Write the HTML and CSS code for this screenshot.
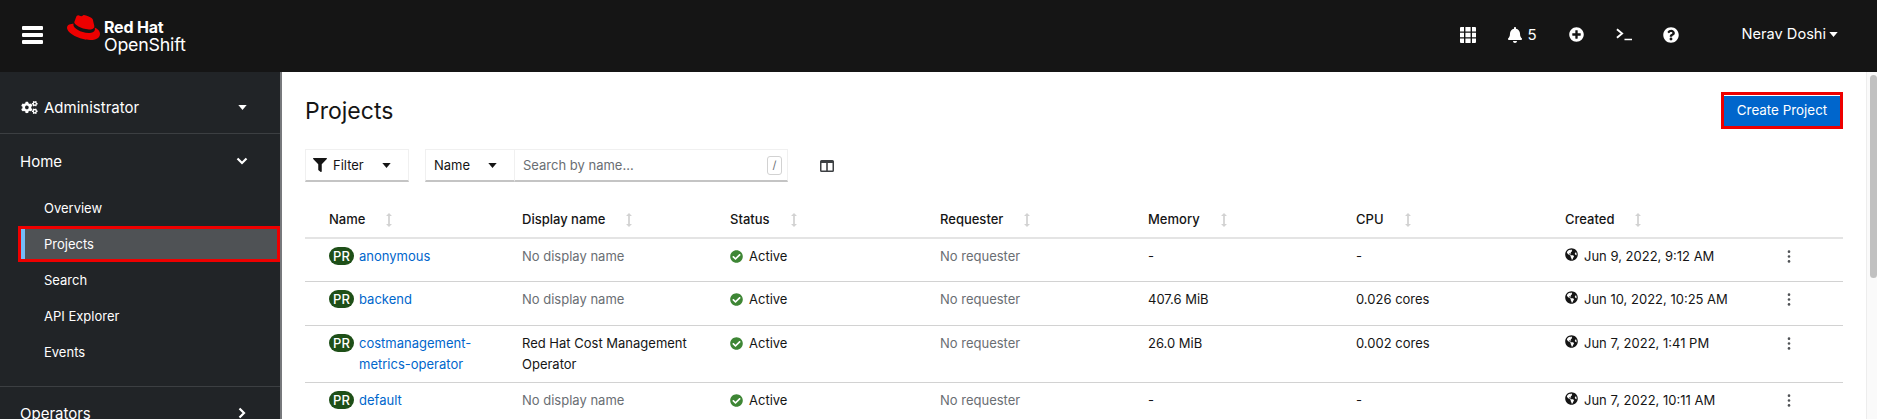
FILE: index.html
```html
<!DOCTYPE html>
<html>

<head>
    <meta charset="UTF-8">
    <title>Projects · Red Hat OpenShift</title>
    <link rel="stylesheet" href="styles.css">
</head>

<body>
    <svg class="icon-defs" xmlns="http://www.w3.org/2000/svg">
        <symbol id="i-hat" viewBox="0 0 24 24"><path d="M16.009 13.386c1.577 0 3.86-.326 3.86-2.202a1.765 1.765 0 0 0-.04-.431l-.94-4.08c-.216-.898-.406-1.305-1.982-2.093-1.223-.625-3.888-1.658-4.676-1.658-.733 0-.947.946-1.822.946-.842 0-1.467-.706-2.255-.706-.757 0-1.25.515-1.63 1.576 0 0-1.06 2.99-1.197 3.424a.81.81 0 0 0-.028.245c0 1.162 4.577 4.974 10.71 4.974m4.101-1.435c.218 1.032.218 1.14.218 1.277 0 1.765-1.984 2.745-4.593 2.745-5.895.004-11.06-3.451-11.06-5.734a2.326 2.326 0 0 1 .19-.925C2.746 9.415 0 9.794 0 12.217c0 3.969 9.405 8.861 16.851 8.861 5.71 0 7.149-2.582 7.149-4.62 0-1.605-1.387-3.425-3.887-4.512"/></symbol>
        <symbol id="i-cogs" viewBox="0 0 640 512"><path d="M512.1 191l-8.2 14.3c-3 5.3-9.4 7.5-15.1 5.4-11.8-4.4-22.6-10.7-32.1-18.6-4.6-3.8-5.8-10.5-2.8-15.7l8.2-14.3c-6.9-8-12.3-17.3-15.9-27.4h-16.5c-6 0-11.2-4.3-12.2-10.3-2-12-2.1-24.6 0-37.1 1-6 6.2-10.4 12.2-10.4h16.5c3.6-10.1 9-19.4 15.9-27.4l-8.2-14.3c-3-5.2-1.9-11.9 2.8-15.7 9.5-7.9 20.4-14.2 32.1-18.6 5.7-2.1 12.1.1 15.1 5.4l8.2 14.3c10.5-1.9 21.2-1.9 31.7 0L552 6.3c3-5.3 9.4-7.5 15.1-5.4 11.8 4.4 22.6 10.7 32.1 18.6 4.6 3.8 5.8 10.5 2.8 15.7l-8.2 14.3c6.9 8 12.3 17.3 15.9 27.4h16.5c6 0 11.2 4.3 12.2 10.3 2 12 2.1 24.6 0 37.1-1 6-6.2 10.4-12.2 10.4h-16.5c-3.6 10.1-9 19.4-15.9 27.4l8.2 14.3c3 5.2 1.9 11.9-2.8 15.7-9.5 7.9-20.4 14.2-32.1 18.6-5.7 2.1-12.1-.1-15.1-5.4l-8.2-14.3c-10.4 1.9-21.2 1.9-31.7 0zm-10.5-58.8c38.5 29.6 82.4-14.3 52.8-52.8-38.5-29.7-82.4 14.3-52.8 52.8zM386.3 286.1l33.7 16.8c10.1 5.8 14.5 18.1 10.5 29.1-8.9 24.2-26.4 46.4-42.6 65.8-7.4 8.9-20.2 11.1-30.3 5.3l-29.1-16.8c-16 13.7-34.6 24.6-54.9 31.7v33.6c0 11.6-8.3 21.6-19.7 23.6-24.6 4.2-50.4 4.4-75.9 0-11.5-2-20-11.9-20-23.6V418c-20.3-7.2-38.9-18-54.9-31.7L74 403c-10 5.8-22.9 3.6-30.3-5.3-16.2-19.4-33.3-41.6-42.2-65.7-4-10.9.4-23.2 10.5-29.1l33.3-16.8c-3.9-20.9-3.9-42.4 0-63.4L12 205.8c-10.1-5.8-14.6-18.1-10.5-29 8.9-24.2 26-46.4 42.2-65.8 7.4-8.9 20.2-11.1 30.3-5.3l29.1 16.8c16-13.7 34.6-24.6 54.9-31.7V57.1c0-11.5 8.2-21.5 19.6-23.5 24.6-4.2 50.5-4.4 76-.1 11.5 2 20 11.9 20 23.6v33.6c20.3 7.2 38.9 18 54.9 31.7l29.1-16.8c10-5.8 22.9-3.6 30.3 5.3 16.2 19.4 33.2 41.6 42.1 65.8 4 10.9.1 23.2-10 29.1l-33.7 16.8c3.9 21 3.9 42.5 0 63.5zm-117.6 21.1c59.2-77-28.7-164.9-105.7-105.7-59.2 77 28.7 164.9 105.7 105.7zm243.4 182.7l-8.2 14.3c-3 5.3-9.4 7.5-15.1 5.4-11.8-4.4-22.6-10.7-32.1-18.6-4.6-3.8-5.8-10.5-2.8-15.7l8.2-14.3c-6.9-8-12.3-17.3-15.9-27.4h-16.5c-6 0-11.2-4.3-12.2-10.3-2-12-2.1-24.6 0-37.1 1-6 6.2-10.4 12.2-10.4h16.5c3.6-10.1 9-19.4 15.9-27.4l-8.2-14.3c-3-5.2-1.9-11.9 2.8-15.7 9.5-7.9 20.4-14.2 32.1-18.6 5.7-2.1 12.1.1 15.1 5.4l8.2 14.3c10.5-1.9 21.2-1.9 31.7 0l8.2-14.3c3-5.3 9.4-7.5 15.1-5.4 11.8 4.4 22.6 10.7 32.1 18.6 4.6 3.8 5.8 10.5 2.8 15.7l-8.2 14.3c6.9 8 12.3 17.3 15.9 27.4h16.5c6 0 11.2 4.3 12.2 10.3 2 12 2.1 24.6 0 37.1-1 6-6.2 10.4-12.2 10.4h-16.5c-3.6 10.1-9 19.4-15.9 27.4l8.2 14.3c3 5.2 1.9 11.9-2.8 15.7-9.5 7.9-20.4 14.2-32.1 18.6-5.7 2.1-12.1-.1-15.1-5.4l-8.2-14.3c-10.4 1.9-21.2 1.9-31.7 0zM501.6 431c38.5 29.6 82.4-14.3 52.8-52.8-38.5-29.6-82.4 14.3-52.8 52.8z"/></symbol>
        <symbol id="i-bell" viewBox="0 0 448 512"><path d="M224 512c35.32 0 63.97-28.65 63.97-64H160.03c0 35.35 28.65 64 63.97 64zm215.39-149.71c-19.32-20.76-55.47-51.99-55.47-154.29 0-77.7-54.48-139.9-127.94-155.16V32c0-17.67-14.32-32-31.98-32s-31.98 14.33-31.98 32v20.84C118.56 68.1 64.08 130.3 64.08 208c0 102.3-36.15 133.53-55.47 154.29-6 6.45-8.66 14.16-8.61 21.71.11 16.4 12.98 32 32.1 32h383.8c19.12 0 32-15.6 32.1-32 .05-7.55-2.61-15.27-8.61-21.71z"/></symbol>
        <symbol id="i-plus" viewBox="0 0 512 512"><path d="M256 8C119 8 8 119 8 256s111 248 248 248 248-111 248-248S393 8 256 8zm144 276c0 6.6-5.4 12-12 12h-92v92c0 6.6-5.4 12-12 12h-56c-6.6 0-12-5.4-12-12v-92h-92c-6.6 0-12-5.4-12-12v-56c0-6.6 5.4-12 12-12h92v-92c0-6.6 5.4-12 12-12h56c6.6 0 12 5.4 12 12v92h92c6.6 0 12 5.4 12 12v56z"/></symbol>
        <symbol id="i-help" viewBox="0 0 512 512"><path d="M504 256c0 136.997-111.043 248-248 248S8 392.997 8 256C8 119.083 119.043 8 256 8s248 111.083 248 248zM262.655 90c-54.497 0-89.255 22.957-116.549 63.758-3.536 5.286-2.353 12.415 2.715 16.258l34.699 26.31c5.205 3.947 12.621 3.008 16.665-2.122 17.864-22.658 30.113-35.797 57.303-35.797 20.429 0 45.698 13.148 45.698 32.958 0 14.976-12.363 22.667-32.534 33.976C247.128 238.528 216 254.941 216 296v4c0 6.627 5.373 12 12 12h56c6.627 0 12-5.373 12-12v-1.333c0-28.462 83.186-29.647 83.186-106.667 0-58.002-60.165-102-116.531-102zM256 338c-25.365 0-46 20.635-46 46 0 25.364 20.635 46 46 46s46-20.636 46-46c0-25.365-20.635-46-46-46z"/></symbol>
        <symbol id="i-filter" viewBox="0 0 512 512"><path d="M487.976 0H24.028C2.71 0-8.047 25.866 7.058 40.971L192 225.941V432c0 7.831 3.821 15.17 10.237 19.662l80 55.98C298.02 518.69 320 507.493 320 487.98V225.941l184.947-184.97C520.021 25.896 509.338 0 487.976 0z"/></symbol>
        <symbol id="i-check" viewBox="0 0 512 512"><path d="M504 256c0 136.967-111.033 248-248 248S8 392.967 8 256 119.033 8 256 8s248 111.033 248 248zM227.314 387.314l184-184c6.248-6.248 6.248-16.379 0-22.627l-22.627-22.627c-6.248-6.249-16.379-6.249-22.628 0L216 308.118l-70.059-70.059c-6.248-6.248-16.379-6.248-22.628 0l-22.627 22.627c-6.248 6.248-6.248 16.379 0 22.627l104 104c6.249 6.249 16.379 6.249 22.628.001z"/></symbol>
        <symbol id="i-globe" viewBox="0 0 496 512"><path d="M248 8C111.03 8 0 119.03 0 256s111.03 248 248 248 248-111.03 248-248S384.97 8 248 8zm82.29 357.6c-3.9 3.88-7.99 7.95-11.31 11.28-2.99 3-5.1 6.7-6.17 10.71-1.51 5.66-2.73 11.38-4.77 16.87l-17.39 46.85c-13.76 3-28 4.69-42.65 4.69v-27.38c1.69-12.62-7.64-36.26-22.63-51.25-6-6-9.37-14.14-9.37-22.63v-32.01c0-11.64-6.27-22.34-16.46-27.97-14.37-7.95-34.81-19.06-48.81-26.11-11.48-5.78-22.1-13.14-31.65-21.75l-.8-.72a114.792 114.792 0 0 1-18.06-20.74c-9.38-13.77-24.66-36.42-34.59-51.14 20.47-45.5 57.36-82.04 103.2-101.89l24.01 12.01C203.48 89.74 216 82.01 216 70.11v-11.3c7.99-1.29 16.12-2.11 24.39-2.42l28.3 28.3c6.25 6.25 6.25 16.38 0 22.63L264 112l-10.34 10.34c-3.12 3.12-3.12 8.19 0 11.31l4.69 4.69c3.12 3.12 3.12 8.19 0 11.31l-8 8a8.008 8.008 0 0 1-5.66 2.34h-8.99c-2.08 0-4.08.81-5.58 2.27l-9.92 9.65a8.008 8.008 0 0 0-1.58 9.31l15.59 31.19c2.66 5.32-1.21 11.58-7.15 11.58h-5.64c-1.93 0-3.79-.7-5.24-1.96l-9.28-8.06a16.017 16.017 0 0 0-15.55-3.1l-31.17 10.39a11.95 11.95 0 0 0-8.17 11.34c0 4.53 2.56 8.66 6.61 10.69l11.08 5.54c9.41 4.71 19.79 7.16 30.31 7.16s22.59 27.29 32 32h66.75c8.49 0 16.62 3.37 22.63 9.37l13.69 13.69a30.503 30.503 0 0 1 8.93 21.57 46.536 46.536 0 0 1-13.72 32.98zM417 274.25c-5.79-1.45-10.84-5-14.15-9.97l-17.98-26.97a23.97 23.97 0 0 1 0-26.62l19.59-29.38c2.32-3.47 5.5-6.29 9.24-8.15l12.98-6.49C440.2 193.59 448 223.87 448 256c0 8.67-.74 17.16-1.82 25.54L417 274.25z"/></symbol>
        <symbol id="i-caret" viewBox="0 0 10 6"><path d="M0 0h10L5 6z"/></symbol>
        <symbol id="i-sort" viewBox="0 0 8 16"><path d="M4 0l3.400 3.400H5v9.200h2.400L4 16 .6 12.600H3V3.400H.6z"/></symbol>
        <symbol id="i-kebab" viewBox="0 0 4 16"><circle cx="2" cy="2" r="1.600"/><circle cx="2" cy="8" r="1.600"/><circle cx="2" cy="14" r="1.600"/></symbol>
    </svg>

    <header class="masthead">
        <button class="burger" type="button"><span></span><span></span><span></span></button>
        <div class="brand">
            <svg class="brand-hat"><use href="#i-hat"/></svg>
            <div class="brand-text">
                <div class="brand-red">Red Hat</div>
                <div class="brand-product">OpenShift</div>
            </div>
        </div>
        <div class="tools">
            <svg class="tool-grid" viewBox="0 0 16 16">
                <path d="M0 1a1 1 0 0 1 1-1h3v4.400H0zM5.400 0h5.200v4.400H5.400zM12 0h3a1 1 0 0 1 1 1v3.400h-4zM0 5.800h4v4.400H0zM5.400 5.800h5.200v4.400H5.400zM12 5.800h4v4.400h-4zM0 11.600h4V16H1a1 1 0 0 1-1-1zM5.400 11.600h5.200V16H5.400zM12 11.600h4V15a1 1 0 0 1-1 1h-3z"/>
            </svg>
            <span class="tool-bell"><svg class="bell-icon"><use href="#i-bell"/></svg>5</span>
            <svg class="tool-plus"><use href="#i-plus"/></svg>
            <svg class="tool-term" viewBox="0 0 17 13"><path d="M1 1l5.500 4.500L1 10" fill="none" stroke="#fff" stroke-width="2"/><path d="M9 11h8v1.600H9z"/></svg>
            <svg class="tool-help"><use href="#i-help"/></svg>
            <span class="user">Nerav Doshi<svg class="caret"><use href="#i-caret"/></svg></span>
        </div>
    </header>

    <div class="shell">
        <nav class="sidebar">
            <div class="perspective">
                <svg class="cogs"><use href="#i-cogs"/></svg>
                <span>Administrator</span>
                <svg class="caret nav-caret"><use href="#i-caret"/></svg>
            </div>
            <div class="nav-group">
                <div class="nav-title nav-open">
                    <span>Home</span>
                    <svg class="chevron" viewBox="0 0 12 8"><path d="M1.500 1.500L6 6l4.500-4.500" fill="none" stroke="#fff" stroke-width="2.200"/></svg>
                </div>
                <a class="nav-item">Overview</a>
                <a class="nav-item active">Projects</a>
                <a class="nav-item">Search</a>
                <a class="nav-item">API Explorer</a>
                <a class="nav-item">Events</a>
            </div>
            <div class="nav-title">
                <span>Operators</span>
                <svg class="chevron-right" viewBox="0 0 8 12"><path d="M1.500 1.500L6 6l-4.500 4.500" fill="none" stroke="#fff" stroke-width="2.200"/></svg>
            </div>
        </nav>

        <main class="content">
            <div class="title-row">
                <h1>Projects</h1>
                <button class="create-btn" type="button">Create Project</button>
            </div>

            <div class="toolbar">
                <div class="select filter-select">
                    <svg class="filter-icon"><use href="#i-filter"/></svg>
                    <span>Filter</span>
                    <svg class="caret dark"><use href="#i-caret"/></svg>
                </div>
                <div class="search-group">
                    <div class="select name-select">
                        <span>Name</span>
                        <svg class="caret dark"><use href="#i-caret"/></svg>
                    </div>
                    <div class="search-box">
                        <span class="placeholder">Search by name...</span>
                        <kbd>/</kbd>
                    </div>
                </div>
                <svg class="columns-icon" viewBox="0 0 14 12"><path d="M1.500 0h11A1.500 1.500 0 0 1 14 1.500v9a1.500 1.500 0 0 1-1.500 1.500h-11A1.500 1.500 0 0 1 0 10.500v-9A1.500 1.500 0 0 1 1.500 0zm0 3v7.500h4.700V3zm6.300 0v7.500h4.700V3z"/></svg>
            </div>

            <table class="projects">
                <colgroup>
                    <col class="c-name"><col class="c-display"><col class="c-status"><col class="c-mid"><col class="c-mid"><col class="c-cpu"><col class="c-date"><col>
                </colgroup>
                <thead>
                    <tr>
                        <th>Name<svg class="sort"><use href="#i-sort"/></svg></th>
                        <th>Display name<svg class="sort"><use href="#i-sort"/></svg></th>
                        <th>Status<svg class="sort"><use href="#i-sort"/></svg></th>
                        <th>Requester<svg class="sort"><use href="#i-sort"/></svg></th>
                        <th>Memory<svg class="sort"><use href="#i-sort"/></svg></th>
                        <th>CPU<svg class="sort"><use href="#i-sort"/></svg></th>
                        <th>Created<svg class="sort"><use href="#i-sort"/></svg></th>
                        <th></th>
                    </tr>
                </thead>
                <tbody>
                    <tr>
                        <td><div class="res"><span class="badge">PR</span><a>anonymous</a></div></td>
                        <td class="muted">No display name</td>
                        <td><svg class="check"><use href="#i-check"/></svg>Active</td>
                        <td class="muted">No requester</td>
                        <td>-</td>
                        <td>-</td>
                        <td><svg class="globe"><use href="#i-globe"/></svg>Jun 9, 2022, 9:12 AM</td>
                        <td><svg class="kebab"><use href="#i-kebab"/></svg></td>
                    </tr>
                    <tr>
                        <td><div class="res"><span class="badge">PR</span><a>backend</a></div></td>
                        <td class="muted">No display name</td>
                        <td><svg class="check"><use href="#i-check"/></svg>Active</td>
                        <td class="muted">No requester</td>
                        <td>407.6 MiB</td>
                        <td>0.026 cores</td>
                        <td><svg class="globe"><use href="#i-globe"/></svg>Jun 10, 2022, 10:25 AM</td>
                        <td><svg class="kebab"><use href="#i-kebab"/></svg></td>
                    </tr>
                    <tr>
                        <td><div class="res"><span class="badge">PR</span><a>costmanagement-<br>metrics-operator</a></div></td>
                        <td>Red Hat Cost Management<br>Operator</td>
                        <td><svg class="check"><use href="#i-check"/></svg>Active</td>
                        <td class="muted">No requester</td>
                        <td>26.0 MiB</td>
                        <td>0.002 cores</td>
                        <td><svg class="globe"><use href="#i-globe"/></svg>Jun 7, 2022, 1:41 PM</td>
                        <td><svg class="kebab"><use href="#i-kebab"/></svg></td>
                    </tr>
                    <tr>
                        <td><div class="res"><span class="badge">PR</span><a>default</a></div></td>
                        <td class="muted">No display name</td>
                        <td><svg class="check"><use href="#i-check"/></svg>Active</td>
                        <td class="muted">No requester</td>
                        <td>-</td>
                        <td>-</td>
                        <td><svg class="globe"><use href="#i-globe"/></svg>Jun 7, 2022, 10:11 AM</td>
                        <td><svg class="kebab"><use href="#i-kebab"/></svg></td>
                    </tr>
                </tbody>
            </table>
        </main>

        <div class="scrollbar"><div class="thumb"></div></div>
    </div>
</body>

</html>
```

FILE: styles.css
```css
* {
    box-sizing: border-box;
}

html,
body {
    margin: 0;
    height: 419px;
    overflow: hidden;
}

body {
    font-family: "Inter", "Noto Sans", sans-serif;
    font-size: 13px;
    line-height: 21px;
    color: #151515;
    background-color: #fff;
}

svg {
    fill: currentColor;
}

.icon-defs {
    display: none;
}

/* top bar */
.masthead {
    height: 72px;
    display: flex;
    align-items: center;
    padding-bottom: 3px;
    background-color: #151515;
    color: #fff;
}

.burger {
    display: flex;
    flex-direction: column;
    gap: 3px;
    width: 21px;
    margin: 0 0 0 22px;
    padding: 0;
    border: 0;
    background: none;
}

.burger span {
    height: 4px;
    border-radius: 1px;
    background-color: #fff;
}

.brand {
    display: flex;
    align-items: flex-start;
    margin-left: 24px;
}

.brand-hat {
    width: 33px;
    height: 33px;
    color: #ee0000;
    margin: -5px 4px 0 0;
}

.brand-text {
    margin-top: 2px;
    line-height: 18px;
    letter-spacing: -0.2px;
}

.brand-red {
    font-size: 16px;
    font-weight: 700;
}

.brand-product {
    font-size: 17.800px;
    font-weight: 400;
}

.tools {
    display: flex;
    align-items: center;
    margin-left: auto;
    margin-right: 39px;
}

.tool-grid {
    width: 16px;
    height: 16px;
    margin-right: 32px;
}

.tool-bell {
    display: flex;
    align-items: center;
    gap: 5px;
    font-size: 15px;
    margin-right: 32px;
}

.bell-icon {
    width: 14px;
    height: 16px;
}

.tool-plus {
    width: 15px;
    height: 15px;
    margin-right: 32px;
}

.tool-term {
    width: 16px;
    height: 13px;
    margin-right: 31px;
}

.tool-help {
    width: 16px;
    height: 16px;
    margin-right: 63px;
}

.user {
    display: flex;
    align-items: center;
    gap: 3px;
    font-size: 14.600px;
}

.caret {
    width: 9px;
    height: 5px;
}

.caret.dark {
    color: #151515;
}

/* left nav */
.shell {
    display: flex;
    height: 347px;
}

.sidebar {
    width: 282px;
    flex: none;
    background-color: #212427;
    border-right: 2px solid #77797c;
    color: #fff;
    font-size: 15px;
    overflow: hidden;
}

.perspective {
    display: flex;
    align-items: center;
    height: 62px;
    padding: 9px 33px 0 21px;
    border-bottom: 1px solid #3c3f42;
}

.cogs {
    width: 17px;
    height: 13px;
    margin-right: 6px;
}

.nav-caret {
    margin-left: auto;
}

.nav-group {
    padding-bottom: 16px;
    border-bottom: 1px solid #3c3f42;
}

.nav-title {
    display: flex;
    align-items: center;
    justify-content: space-between;
    height: 52px;
    padding: 0 32px 0 20px;
}

.nav-open {
    height: 56px;
    padding-bottom: 2px;
}

.chevron {
    width: 12px;
    height: 8px;
}

.chevron-right {
    width: 8px;
    height: 12px;
    margin-right: 2px;
}

.nav-item {
    display: block;
    height: 36px;
    margin-left: 18px;
    padding-left: 26px;
    font-size: 13px;
    line-height: 36px;
}

.nav-item.active {
    background-color: #4f5255;
    box-shadow: inset 7px 0 0 #73bcf7;
    outline: 3px solid #ee0000;
    outline-offset: -3px;
}

/* main area */
.content {
    flex: 1;
    min-width: 0;
    padding: 20px 23px 0 23px;
}

.title-row {
    display: flex;
    align-items: center;
    justify-content: space-between;
    height: 37px;
}

h1 {
    margin: 0;
    font-size: 23px;
    font-weight: 400;
    line-height: 30px;
}

.create-btn {
    width: 122px;
    height: 37px;
    border: 3px solid #ee0000;
    border-radius: 0;
    background-color: #0066cc;
    color: #fff;
    font: inherit;
    font-size: 13.400px;
    box-shadow: inset 0 1px 0 #fff;
}

.toolbar {
    display: flex;
    align-items: center;
    margin-top: 20px;
}

.select {
    display: flex;
    align-items: center;
    height: 33px;
    background-color: #fff;
    border: 1px solid #f0f0f0;
    border-bottom: 2px solid #c4c4c4;
}

.filter-select {
    width: 104px;
    padding-left: 7px;
}

.filter-icon {
    width: 14px;
    height: 14px;
    margin-right: 6px;
}

.filter-select .caret {
    margin-left: 18px;
}

.search-group {
    display: flex;
    margin-left: 16px;
}

.name-select {
    width: 90px;
    padding-left: 8px;
}

.name-select .caret {
    margin-left: 18px;
}

.search-box {
    display: flex;
    align-items: center;
    justify-content: space-between;
    width: 273px;
    height: 33px;
    padding: 0 5px 0 8px;
    border: 1px solid #f0f0f0;
    border-left: 0;
    border-bottom: 2px solid #c4c4c4;
}

.placeholder {
    color: #6a6e73;
}

kbd {
    width: 15px;
    height: 19px;
    border: 1px solid #d2d2d2;
    border-radius: 3px;
    font-family: inherit;
    font-size: 11px;
    line-height: 17px;
    text-align: center;
    color: #6a6e73;
}

.columns-icon {
    width: 14px;
    height: 12px;
    margin-left: 32px;
    color: #3c3f42;
}

/* table */
.projects {
    width: 100%;
    margin-top: 19px;
    border-collapse: collapse;
    table-layout: fixed;
}

.c-name {
    width: 217px;
}

.c-display {
    width: 208px;
}

.c-status {
    width: 210px;
}

.c-mid {
    width: 208px;
}

.c-cpu {
    width: 209px;
}

.c-date {
    width: 222px;
}

th {
    height: 37px;
    padding: 0;
    text-align: left;
    font-weight: 500;
    font-size: 13px;
    border-bottom: 2px solid #e4e4e4;
}

.sort {
    width: 8px;
    height: 14px;
    margin-left: 20px;
    vertical-align: -3px;
    color: #d2d2d2;
}

tbody tr {
    height: 43.500px;
}

td {
    padding: 7px 0;
    vertical-align: top;
    border-bottom: 1px solid #d2d2d2;
}

th:first-child,
td:first-child {
    padding-left: 24px;
}

.muted {
    color: #6a6e73;
}

.res {
    display: flex;
    gap: 5px;
}

.res a {
    color: #0066cc;
}

.badge {
    flex: none;
    width: 25px;
    height: 18px;
    margin-top: 1px;
    border-radius: 9px;
    background-color: #1e4f18;
    color: #fff;
    font-size: 13px;
    font-weight: 500;
    line-height: 18px;
    text-align: center;
}

.check {
    width: 13px;
    height: 13px;
    margin-right: 6px;
    vertical-align: -2px;
    color: #3e8635;
}

.globe {
    width: 13px;
    height: 13px;
    margin-right: 6px;
    vertical-align: 0;
    color: #151515;
}

.kebab {
    width: 4px;
    height: 13px;
    vertical-align: -2px;
    color: #4f5255;
}

.scrollbar {
    width: 11px;
    flex: none;
    padding: 3px 0 0 3px;
    background-color: #fafafa;
    border-left: 1px solid #ededed;
}

.thumb {
    width: 7px;
    height: 203px;
    border-radius: 4px;
    background-color: #c1c1c1;
}
```
